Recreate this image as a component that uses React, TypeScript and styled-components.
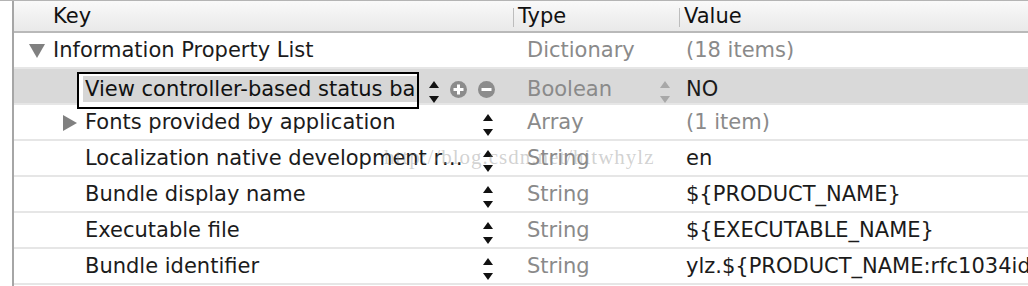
import React from "react";
import styled, { createGlobalStyle } from "styled-components";

const GlobalStyle = createGlobalStyle`
    html, body {
        margin: 0;
        padding: 0;
        background: #ffffff;
    }
    body {
        font-family: "DejaVu Sans", "Noto Sans", sans-serif;
        overflow: hidden;
    }
`;

const Page = styled.div`
    position: relative;
    width: 1028px;
    height: 286px;
    overflow: hidden;
    border-top: 1px solid #b4b4b4;
    box-sizing: border-box;
`;

const Table = styled.div`
    margin-left: 12px;
    border-left: 2px solid #a6a6a6;
    height: 100%;
`;

const HeaderRow = styled.div`
    display: grid;
    grid-template-columns: 499px 166px 1fr;
    height: 30px;
    background: linear-gradient(#f9f9f9, #e9e9e9);
    border-bottom: 2px solid #b9b9b9;
`;

const HeaderCell = styled.div<{ $pad: number; $divider?: boolean }>`
    display: flex;
    align-items: center;
    padding-left: ${(p) => p.$pad}px;
    font-size: 21px;
    color: #111;
    position: relative;

    ${(p) =>
        p.$divider &&
        `
        &::before {
            content: "";
            position: absolute;
            left: 0;
            top: 7px;
            bottom: 4px;
            width: 1px;
            background: #bdbdbd;
        }
    `}
`;

const Row = styled.div<{ $selected?: boolean }>`
    display: grid;
    grid-template-columns: 499px 166px 1fr;
    height: 34px;
    border-bottom: 2px solid #e6e6e6;
    background: ${(p) => (p.$selected ? "#d9d9d9" : "#ffffff")};
    font-size: 21px;
`;

const KeyCell = styled.div<{ $depth: number }>`
    display: flex;
    align-items: center;
    padding-left: ${(p) => 15 + p.$depth * 32}px;
    padding-right: 20px;
    min-width: 0;
`;

const DisclosureSlot = styled.div`
    flex: 0 0 24px;
    display: flex;
    align-items: center;
`;

const Disclosure = styled.span<{ $open?: boolean }>`
    display: block;
    width: 0;
    height: 0;
    ${(p) =>
        p.$open
            ? `
        border-left: 8px solid transparent;
        border-right: 8px solid transparent;
        border-top: 14px solid #808080;
        margin-top: 2px;
    `
            : `
        margin-left: 2px;
        margin-top: 1px;
        border-top: 8px solid transparent;
        border-bottom: 8px solid transparent;
        border-left: 14px solid #808080;
    `}
`;

const KeyText = styled.div`
    flex: 1;
    min-width: 0;
    color: #1b1b1b;
    white-space: nowrap;
    overflow: hidden;
    text-overflow: ellipsis;
`;

const EditBox = styled.div`
    flex: 0 0 342px;
    margin-left: -8px;
    margin-top: 3px;
    height: 37px;
    box-sizing: border-box;
    border: 2px solid #000;
    background: #fff;
    padding: 2px 0 5px 4px;
    overflow: hidden;
    display: flex;
`;

const Selection = styled.span`
    display: flex;
    align-items: center;
    padding-left: 2px;
    background: #d6d6d6;
    color: #111;
    white-space: nowrap;
`;

const Controls = styled.div<{ $gap: number }>`
    display: flex;
    align-items: center;
    gap: ${(p) => p.$gap}px;
    margin-left: 10px;
    flex-shrink: 0;
`;

const StepperIcon = styled.svg`
    display: block;
    margin-top: 6px;
`;

const TypeCell = styled.div`
    display: flex;
    align-items: center;
    padding-left: 14px;
    padding-right: 9px;
    color: #8a8a8a;
`;

const TypeLabel = styled.span`
    flex: 1;
`;

const ValueCell = styled.div<{ $muted?: boolean }>`
    display: flex;
    align-items: center;
    padding-left: 7px;
    color: ${(p) => (p.$muted ? "#8a8a8a" : "#1b1b1b")};
    white-space: nowrap;
    overflow: hidden;
`;

const Watermark = styled.div`
    position: absolute;
    left: 384px;
    top: 144px;
    font-family: "Liberation Serif", "DejaVu Serif", serif;
    font-size: 21px;
    letter-spacing: 1px;
    color: rgba(140, 140, 140, 0.4);
    pointer-events: none;
    white-space: nowrap;
`;

function Stepper({ color = "#111" }: { color?: string }) {
    return (
        <StepperIcon width="10" height="22" viewBox="0 0 10 22">
            <path d="M5 0 L10 7 L0 7 Z" fill={color} />
            <path d="M0 15 L10 15 L5 22 Z" fill={color} />
        </StepperIcon>
    );
}

function RoundButton({ kind }: { kind: "plus" | "minus" }) {
    return (
        <svg width="17" height="17" viewBox="0 0 17 17" style={{ display: "block" }}>
            <circle cx="8.5" cy="8.5" r="8.5" fill="#8c8c8c" />
            <rect x="3.5" y="7" width="10" height="3" fill="#fff" />
            {kind === "plus" && <rect x="7" y="3.5" width="3" height="10" fill="#fff" />}
        </svg>
    );
}

interface PlistRow {
    key: string;
    depth: number;
    disclosure?: "open" | "closed";
    type: string;
    value: string;
    mutedValue?: boolean;
    editing?: boolean;
}

const rows: PlistRow[] = [
    { key: "Information Property List", depth: 0, disclosure: "open", type: "Dictionary", value: "(18 items)", mutedValue: true },
    { key: "View controller-based status bar appearance", depth: 1, type: "Boolean", value: "NO", editing: true },
    { key: "Fonts provided by application", depth: 1, disclosure: "closed", type: "Array", value: "(1 item)", mutedValue: true },
    { key: "Localization native development region", depth: 1, type: "String", value: "en" },
    { key: "Bundle display name", depth: 1, type: "String", value: "${PRODUCT_NAME}" },
    { key: "Executable file", depth: 1, type: "String", value: "${EXECUTABLE_NAME}" },
    { key: "Bundle identifier", depth: 1, type: "String", value: "ylz.${PRODUCT_NAME:rfc1034identifier}" },
];

export default function App() {
    return (
        <>
            <GlobalStyle />
            <Page>
                <Table>
                    <HeaderRow>
                        <HeaderCell $pad={39}>Key</HeaderCell>
                        <HeaderCell $pad={5} $divider>Type</HeaderCell>
                        <HeaderCell $pad={5} $divider>Value</HeaderCell>
                    </HeaderRow>
                    {rows.map((row, i) => (
                        <Row key={i} $selected={row.editing}>
                            <KeyCell $depth={row.depth}>
                                <DisclosureSlot>
                                    {row.disclosure && <Disclosure $open={row.disclosure === "open"} />}
                                </DisclosureSlot>
                                {row.editing ? (
                                    <>
                                        <EditBox>
                                            <Selection>{row.key}</Selection>
                                        </EditBox>
                                        <Controls $gap={11}>
                                            <Stepper />
                                            <RoundButton kind="plus" />
                                            <RoundButton kind="minus" />
                                        </Controls>
                                    </>
                                ) : (
                                    <>
                                        <KeyText>{row.key}</KeyText>
                                        {row.depth > 0 && (
                                            <Controls $gap={0}>
                                                <Stepper />
                                            </Controls>
                                        )}
                                    </>
                                )}
                            </KeyCell>
                            <TypeCell>
                                <TypeLabel>{row.type}</TypeLabel>
                                {row.editing && <Stepper color="#a8a8a8" />}
                            </TypeCell>
                            <ValueCell $muted={row.mutedValue}>{row.value}</ValueCell>
                        </Row>
                    ))}
                </Table>
                <Watermark>http://blog.csdn.net/hitwhylz</Watermark>
            </Page>
        </>
    );
}
